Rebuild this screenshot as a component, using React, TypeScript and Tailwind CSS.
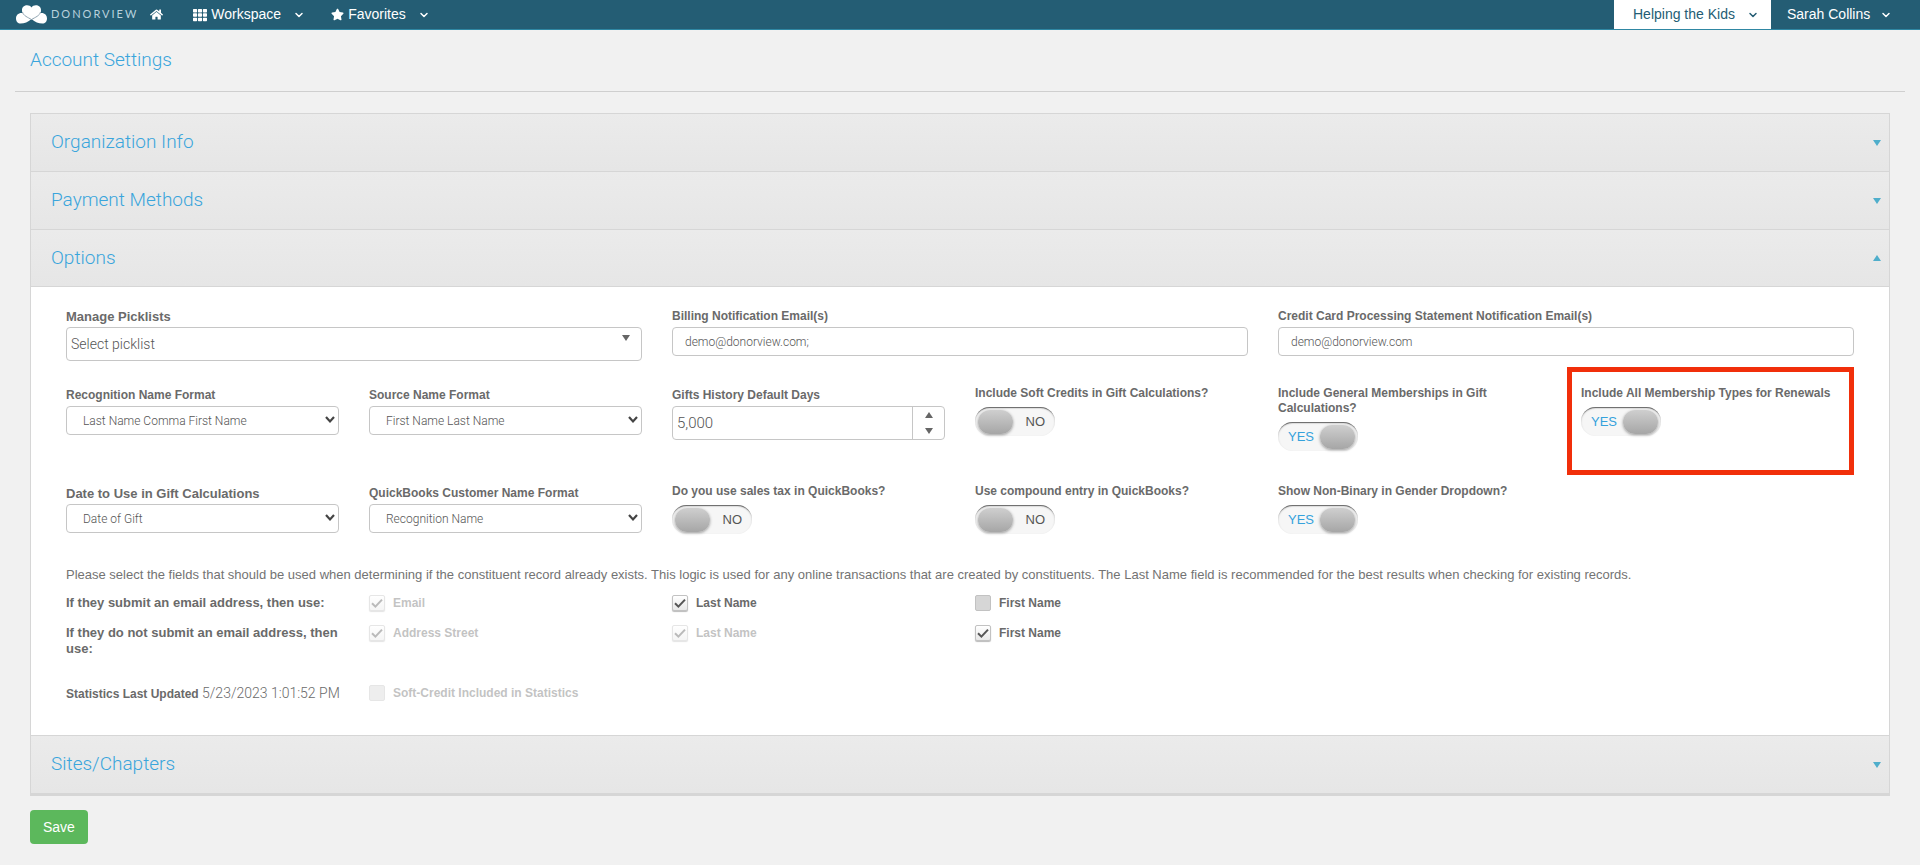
import React, { useId, useState } from "react";
import type { ReactNode } from "react";
import { FaHome, FaStar, FaTh } from "react-icons/fa";
import { FiChevronDown } from "react-icons/fi";

const labelFont = "font-['Liberation_Sans',Arial,sans-serif] font-bold text-[#6a6a6a]";
const labelText = "text-[12px] " + labelFont;
const fieldBox = "w-full rounded border border-[#c6c6c6] bg-white text-[#555] font-light";

function Caret({ up = false, className = "" }: { up?: boolean; className?: string }) {
  return (
    <svg viewBox="0 0 8 6" aria-hidden="true" className={"h-[6px] w-[8px] fill-current " + className}>
      <path d={up ? "M0 6 4 0 8 6Z" : "M0 0H8L4 6Z"} />
    </svg>
  );
}

function Logo() {
  return (
    <a href="#" className="flex items-center gap-1 text-[#b9d2dd]">
      <svg viewBox="0 0 62 38" className="h-[19px] w-[31px]" aria-hidden="true">
        <path d="M31 5C27-2 12-1 12 10c0 2 0 4 1 6C5 15 0 20 0 27c0 6 4 10 9 10 8 0 15-3 22-9 7 6 14 9 22 9 5 0 9-4 9-10 0-7-5-12-13-11 1-2 1-4 1-6C50-1 35-2 31 5Z" fill="#fff" />
        <path d="M13 14c1 7 11 11 18 15 7-4 17-8 18-15" fill="none" stroke="#8fa3b0" strokeWidth="2" />
      </svg>
      <span className="font-[Lato,sans-serif] text-[11px] tracking-[2px]">DONORVIEW</span>
    </a>
  );
}

function PanelHeader({ title, open = false }: { title: string; open?: boolean }) {
  return (
    <button
      type="button"
      aria-expanded={open}
      className={
        "flex w-full items-center justify-between border-b border-[#d6d6d6] bg-linear-to-b from-[#ebebeb] to-[#e6e6e6] pr-2 pl-5 text-left text-[19px] font-light text-[#3aa5dc] " +
        (open ? "h-[57px]" : "h-[58px]")
      }
    >
      <span>{title}</span>
      <Caret up={open} className="text-[#4faecb]" />
    </button>
  );
}

type FieldProps = { label: string; wide?: boolean; large?: boolean; children: (id: string) => ReactNode };

function Field({ label, wide = false, large = false, children }: FieldProps) {
  const id = useId();
  return (
    <div className={wide ? "col-span-2" : ""}>
      <label htmlFor={id} className={"block pb-[3px] leading-[15px] " + labelFont + (large ? " text-[13px]" : " text-[12px]")}>
        {label}
      </label>
      {children(id)}
    </div>
  );
}

function SelectField({ label, value, large }: { label: string; value: string; large?: boolean }) {
  return (
    <Field label={label} large={large}>
      {(id) => (
        <div className="relative">
          <select id={id} className={fieldBox + " h-[29px] appearance-none pr-6 pl-4 text-[12px]"}>
            <option>{value}</option>
          </select>
          <svg viewBox="0 0 10 7" aria-hidden="true" className="pointer-events-none absolute top-[10px] right-1 h-[7px] w-[10px]">
            <path d="M1 1 5 5.4 9 1" fill="none" stroke="#444" strokeWidth="2.2" />
          </svg>
        </div>
      )}
    </Field>
  );
}

function TextField({ label, value }: { label: string; value: string }) {
  return (
    <Field label={label} wide>
      {(id) => <input id={id} type="text" defaultValue={value} className={fieldBox + " h-[29px] px-3 text-[12px]"} />}
    </Field>
  );
}

function Toggle({ label, initial, highlighted = false }: { label: string; initial: boolean; highlighted?: boolean }) {
  const [on, setOn] = useState(initial);
  const id = useId();
  return (
    <div className="relative -mt-[2px]">
      {highlighted && (
        <div className="pointer-events-none absolute -top-[19px] -left-[14px] right-0 h-[108px] border-[5px] border-[#f12f0a]" />
      )}
      <label htmlFor={id} className={"block pb-[6px] leading-[15px] " + labelText}>{label}</label>
      <button
        id={id}
        type="button"
        role="switch"
        aria-checked={on}
        onClick={() => setOn(!on)}
        className={
          "flex h-[29px] w-20 items-center justify-between rounded-full bg-[#f6f6f6] text-[13px] shadow-[inset_0_2px_1px_-1px_#666,inset_0_1px_2px_#ccc] " +
          (on ? "flex-row-reverse pr-[3px] pl-[10px] text-[#35a2dc]" : "pr-[10px] pl-[3px] text-[#555]")
        }
      >
        <span className="h-[24px] w-[35px] rounded-full bg-linear-to-b from-[#cfcfcf] to-[#a6a6a6] shadow-[0_1px_3px_#999]" />
        <span className="font-['Liberation_Sans',Arial,sans-serif]">{on ? "YES" : "NO"}</span>
      </button>
    </div>
  );
}

function Check({ label, checked = false, disabled = false }: { label: string; checked?: boolean; disabled?: boolean }) {
  return (
    <label className={"flex items-center gap-2 self-start leading-4 " + labelText + (disabled ? " opacity-40" : "")}>
      <span className="relative flex">
        <input
          type="checkbox"
          defaultChecked={checked}
          disabled={disabled}
          className="peer size-4 appearance-none rounded-xs border border-[#c2c2c2] bg-[#d6d6d6] checked:bg-white checked:bg-linear-to-b checked:from-white checked:to-[#e8e8e8] checked:shadow-[0_1px_1px_#bbb]"
        />
        <svg viewBox="0 0 16 16" aria-hidden="true" className="pointer-events-none absolute inset-0 hidden size-4 peer-checked:block">
          <path d="M3 8.2 6.4 11.6 13 4.6" fill="none" stroke="#555" strokeWidth="2" />
        </svg>
      </span>
      {label}
    </label>
  );
}

export default function App() {
  return (
    <div className="min-h-screen bg-[#f1f1f1] font-[Roboto,'Liberation_Sans',sans-serif]">
      <nav className="flex h-[30px] items-stretch justify-between border-b border-[#2f87a3] bg-[#245d74] font-['Liberation_Sans',Arial,sans-serif] text-[14px] text-white">
        <div className="flex items-center pl-4">
          <Logo />
          <a href="#" aria-label="Home" className="ml-3"><FaHome size={13} /></a>
          <button type="button" className="ml-[30px] flex items-center gap-1">
            <FaTh size={14} />
            <span>Workspace</span>
            <FiChevronDown size={12} strokeWidth={3} className="ml-2" />
          </button>
          <button type="button" className="ml-[26px] flex items-center gap-1">
            <FaStar size={13} />
            <span>Favorites</span>
            <FiChevronDown size={12} strokeWidth={3} className="ml-2" />
          </button>
        </div>
        <div className="flex">
          <button type="button" className="flex w-[157px] items-center justify-between bg-white pr-3 pl-[19px] text-[#245d74]">
            <span>Helping the Kids</span>
            <FiChevronDown size={12} strokeWidth={3} />
          </button>
          <button type="button" className="flex w-[149px] items-center justify-between pr-7 pl-4">
            <span>Sarah Collins</span>
            <FiChevronDown size={12} strokeWidth={3} />
          </button>
        </div>
      </nav>

      <header className="mx-[15px] border-b border-[#cfcfcf] px-[15px] pt-[17px] pb-[18px]">
        <h1 className="text-[19px] leading-[26px] font-light text-[#3aa5dc]">Account Settings</h1>
      </header>

      <main className="px-[30px] pt-[21px] pb-5">
        <div className="border border-b-2 border-[#d6d6d6]">
          <PanelHeader title="Organization Info" />
          <PanelHeader title="Payment Methods" />
          <PanelHeader title="Options" open />
          <section className="bg-white px-[35px] pt-[22px] pb-[33px]">
            <div className="grid grid-cols-6 gap-x-[30px]">
              <Field label="Manage Picklists" wide large>
                {(id) => (
                  <div className="relative">
                    <select id={id} className={fieldBox + " h-[34px] appearance-none px-1 text-[14px]"}>
                      <option>Select picklist</option>
                    </select>
                    <Caret className="pointer-events-none absolute top-2 right-3 text-[#666]" />
                  </div>
                )}
              </Field>
              <TextField label="Billing Notification Email(s)" value="demo@donorview.com;" />
              <TextField label="Credit Card Processing Statement Notification Email(s)" value="demo@donorview.com" />
            </div>

            <div className="mt-[27px] grid min-h-[98px] grid-cols-6 gap-x-[30px]">
              <SelectField label="Recognition Name Format" value="Last Name Comma First Name" />
              <SelectField label="Source Name Format" value="First Name Last Name" />
              <Field label="Gifts History Default Days">
                {(id) => (
                  <div className="flex h-[34px] overflow-hidden rounded border border-[#c6c6c6] bg-white">
                    <input id={id} type="text" defaultValue="5,000" className="min-w-0 flex-1 px-1 text-[15px] font-light text-[#555]" />
                    <div className="flex w-8 flex-col items-center justify-between border-l border-[#c6c6c6] py-[5px] text-[#666]">
                      <button type="button" aria-label="Increase"><Caret up /></button>
                      <button type="button" aria-label="Decrease"><Caret /></button>
                    </div>
                  </div>
                )}
              </Field>
              <Toggle label="Include Soft Credits in Gift Calculations?" initial={false} />
              <Toggle label="Include General Memberships in Gift Calculations?" initial />
              <Toggle label="Include All Membership Types for Renewals" initial highlighted />
            </div>

            <div className="grid grid-cols-6 gap-x-[30px]">
              <SelectField label="Date to Use in Gift Calculations" value="Date of Gift" large />
              <SelectField label="QuickBooks Customer Name Format" value="Recognition Name" />
              <Toggle label="Do you use sales tax in QuickBooks?" initial={false} />
              <Toggle label="Use compound entry in QuickBooks?" initial={false} />
              <Toggle label="Show Non-Binary in Gender Dropdown?" initial />
            </div>

            <p className="mt-[31px] font-['Liberation_Sans',Arial,sans-serif] text-[13px] leading-5 text-[#737373]">
              Please select the fields that should be used when determining if the constituent record already exists. This logic is used for any online transactions that are created by constituents. The Last Name field is recommended for the best results when checking for existing records.
            </p>

            <div className="mt-[10px] grid grid-cols-6 gap-x-[30px] gap-y-[14px]">
              <div className={"text-[13px] leading-4 " + labelFont}>If they submit an email address, then use:</div>
              <Check label="Email" checked disabled />
              <Check label="Last Name" checked />
              <Check label="First Name" />
              <div className={"col-start-1 text-[13px] leading-4 " + labelFont}>If they do not submit an email address, then use:</div>
              <Check label="Address Street" checked disabled />
              <Check label="Last Name" checked disabled />
              <Check label="First Name" checked />
              <div className={"col-start-1 mt-[14px] leading-4 whitespace-nowrap " + labelText}>
                Statistics Last Updated <span className="font-[Roboto,sans-serif] text-[14px] font-light">5/23/2023 1:01:52 PM</span>
              </div>
              <div className="col-span-2 mt-[14px]"><Check label="Soft-Credit Included in Statistics" disabled /></div>
            </div>
          </section>
          <div className="border-t border-[#d6d6d6]">
            <PanelHeader title="Sites/Chapters" />
          </div>
        </div>
        <button type="button" className="mt-[14px] h-[34px] rounded bg-[#5cb85c] px-[13px] font-['Liberation_Sans',Arial,sans-serif] text-[14px] text-white">
          Save
        </button>
      </main>
    </div>
  );
}
